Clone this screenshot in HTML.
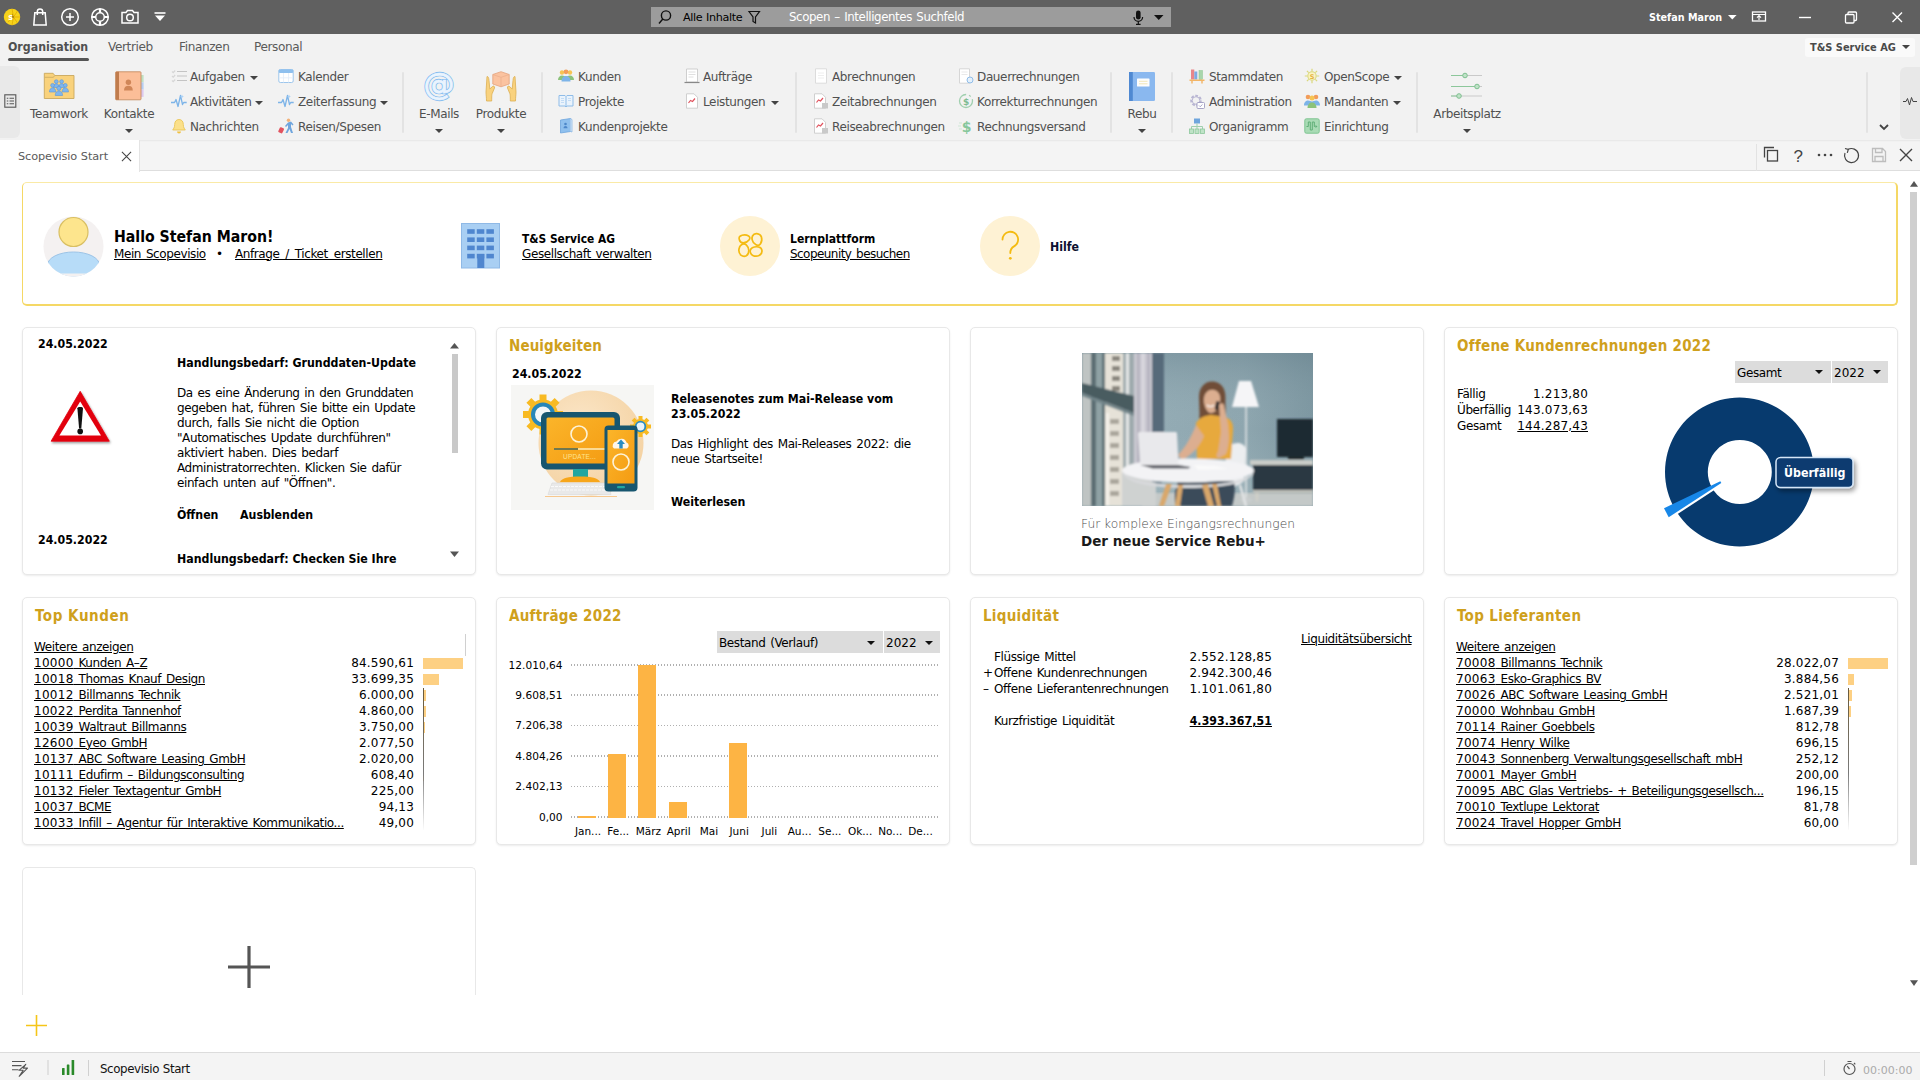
<!DOCTYPE html>
<html lang="de"><head><meta charset="utf-8"><title>Scopevisio Start</title>
<style>
*{box-sizing:border-box;margin:0;padding:0}
html,body{width:1920px;height:1080px;overflow:hidden;background:#fff}
body{position:relative;font-family:"DejaVu Sans","Liberation Sans",sans-serif;font-size:12px;letter-spacing:-.4px;word-spacing:1.400px;color:#000;line-height:15px}
.a{position:absolute;white-space:nowrap}
.b{font-family:"DejaVu Sans Condensed","Liberation Sans",sans-serif;font-weight:bold;font-size:12.25px;letter-spacing:0;word-spacing:0}
.n{letter-spacing:.2px;word-spacing:0}
.u{text-decoration:underline;text-decoration-thickness:1.350px;text-underline-offset:1.300px}
svg{position:absolute;overflow:visible}
#top{left:0;top:0;width:1920px;height:34px;background:#606060}
#menu{left:0;top:34px;width:1920px;height:106px;background:#f2f2f2}
#tabs{left:0;top:140px;width:1920px;height:31px;background:#f4f4f4;border-bottom:1px solid #dedede;box-shadow:inset 0 2px 2px -1px rgba(0,0,0,.06)}
#status{left:0;top:1052px;width:1920px;height:28px;background:#f4f4f4;border-top:1px solid #dcdcdc}
.rt{color:#505050;font-size:12px;letter-spacing:-.36px;word-spacing:0}
.sep{position:absolute;top:72px;width:2px;height:61px;background:#e3e3e3;border-radius:1px}
.card{position:absolute;width:454px;height:248px;background:#fff;border:1px solid #e8e8e8;border-radius:5px;box-shadow:0 1px 2px rgba(0,0,0,.08)}
.ttl{font-family:"DejaVu Sans Condensed","Liberation Sans",sans-serif;font-weight:bold;font-size:15px;letter-spacing:.27px;word-spacing:0;color:#cfa01c}
.r{text-align:right}
.dd{position:absolute;background:#dcdcdc;height:22px}
.tri{position:absolute;width:0;height:0;border-left:4px solid transparent;border-right:4px solid transparent;border-top:4.500px solid #444}
</style></head><body>
<!-- ===== TOP BAR ===== -->
<div id="top" class="a"></div>
<svg style="left:0;top:0" width="200" height="34" viewBox="0 0 200 34" fill="none" stroke="#fff" stroke-width="1.5">
 <circle cx="12" cy="17" r="8.200" fill="#f7d21a" stroke="none"/>
 <g stroke="#e0a800" stroke-width=".7"><path d="M13.500 17L12 8.800M13.500 17L17.500 11M13.500 17L20.200 17M13.500 17L17.500 23M13.500 17L12 25.200M13.500 17L8 22"/></g>
 <path d="M13.500 17l-1.300-3.500 0 7z" fill="#5a4a10" stroke="none"/>
 <text x="8.300" y="19.800" font-family="DejaVu Sans,sans-serif" font-weight="bold" font-size="8" fill="#fff" stroke="none">s</text>
 <path d="M34.800 12.700h10.400l1 12.300h-12.400z M37.300 15v-3.400a2.700 2.700 0 0 1 5.400 0v3.400"/>
 <circle cx="70" cy="17" r="8.3"/><path d="M70 13v8M66 17h8"/>
 <circle cx="100" cy="17" r="8.3"/><circle cx="100" cy="17" r="4.3"/><path d="M100 8.7v4M100 21.3v4M91.7 17h4M104.3 17h4" stroke-width="2.2"/>
 <path d="M122 12.5h4l1.5-2h5l1.5 2h4v10.5h-16z"/><circle cx="130" cy="17.5" r="3.3"/>
 <path d="M154.5 13h11" stroke-width="1.6"/><path d="M155 15.5h10l-5 5.5z" fill="#fff" stroke="none"/>
</svg>
<div class="a" style="left:651px;top:7px;width:520px;height:20px;background:#9c9c9c"></div>
<svg style="left:655px;top:7px" width="520" height="21" viewBox="0 0 520 21" fill="none" stroke="#111" stroke-width="1.4">
 <circle cx="11" cy="8.5" r="4.6"/><path d="M7.8 12L4 16.5"/>
 <path d="M94 4.5h10.5l-4 5.5v6l-2.5-1.5v-4.5z" stroke-width="1.2"/>
 <rect x="481" y="3.5" width="4.6" height="9" rx="2.3" fill="#111" stroke="none"/><path d="M479 10a4.3 4.3 0 0 0 8.6 0M483.3 14.5v2.5M481 17.3h4.6" stroke-width="1.2"/>
 <path d="M499 8h9.5l-4.75 5z" fill="#111" stroke="none"/>
</svg>
<div class="a" style="left:683px;top:10px;color:#000;font-size:11.200px;letter-spacing:-.35px;word-spacing:.5px">Alle Inhalte</div>
<div class="a" style="left:789px;top:10px;color:#fff;font-size:11.800px;letter-spacing:-.4px;word-spacing:1px">Scopen – Intelligentes Suchfeld</div>
<div class="a b" style="left:1649px;top:9.500px;color:#fff;font-size:10.700px">Stefan Maron</div>
<svg style="left:1720px;top:0" width="200" height="34" viewBox="0 0 200 34" fill="none" stroke="#fff" stroke-width="1.3">
 <path d="M8 15h8.6l-4.3 4.6z" fill="#fff" stroke="none"/>
 <rect x="32.5" y="12" width="13" height="9"/><path d="M32.5 14.5h13M39 20v-4M37 17.6l2-2 2 2" stroke-width="1.1"/>
 <path d="M79 17.5h12" stroke-width="1.4"/>
 <rect x="125.5" y="14.5" width="8.5" height="8.5" rx="1"/><path d="M128 14.5v-1.5a1 1 0 0 1 1-1h6.5a1 1 0 0 1 1 1v6.5a1 1 0 0 1-1 1h-1.500"/>
 <path d="M172.500 12.500l9.500 9.500M182 12.500l-9.500 9.500" stroke-width="1.4"/>
</svg>
<!-- ===== MENU + RIBBON ===== -->
<div id="menu" class="a"></div>
<div class="a b" style="left:8px;top:38.500px;font-size:12.250px;color:#505050;line-height:17px">Organisation</div>
<div class="a" style="left:8px;top:58px;width:81px;height:3px;background:#555;border-radius:1.5px"></div>
<div class="a" style="left:108px;top:38.500px;font-size:12.100px;color:#5a5a5a;line-height:17px">Vertrieb</div>
<div class="a" style="left:179px;top:38.500px;font-size:12.100px;color:#5a5a5a;line-height:17px">Finanzen</div>
<div class="a" style="left:254px;top:38.500px;font-size:12.100px;color:#5a5a5a;line-height:17px">Personal</div>
<div class="a" style="left:1805px;top:38px;width:110px;height:19px;background:#fafafa;border-radius:3px"></div>
<div class="a b" style="left:1810px;top:40px;color:#4a4a4a;font-size:10.950px">T&amp;S Service AG</div>
<div class="tri" style="left:1902px;top:45px"></div>
<div class="a" style="left:0;top:66px;width:20px;height:72px;background:#e9e9e9;border-radius:0 6px 6px 0"></div>
<svg style="left:4px;top:94px" width="13" height="14" viewBox="0 0 13 14" fill="none" stroke="#555" stroke-width="1.1"><rect x=".8" y=".8" width="11" height="12.400"/><path d="M2.800 4.300h1.500M5.500 4.300h4.500M2.800 7h1.500M5.500 7h4.500M2.800 9.700h1.500M5.500 9.700h4.500"/></svg>
<div class="a" style="left:1900px;top:67px;width:20px;height:72px;background:#e8e8e8;border-radius:6px 0 0 6px"></div>
<svg style="left:1903px;top:96px" width="14" height="10" viewBox="0 0 14 10" fill="none" stroke="#444" stroke-width="1"><path d="M0 5.500h3l1.500-3 2 6.500 2-7.500 1.500 4h4"/></svg>
<svg style="left:1879px;top:124px" width="10" height="7" viewBox="0 0 10 7" fill="none" stroke="#444" stroke-width="1.800"><path d="M1 1l4 4 4-4"/></svg>
<svg style="left:171px;top:68px" width="16" height="16" viewBox="0 0 16 16"><g stroke="#c4c4c4" stroke-width="1.2" fill="none"><path d="M6 3.500h10M6 8h10M6 12.500h10"/><path d="M1 3.500l1.200 1.200 2-2.200M1 8l1.200 1.200 2-2.200M1 12.500l1.200 1.200 2-2.200" stroke="#d6d6d6"/></g></svg>
<div class="a rt" style="left:190px;top:69.5px">Aufgaben</div>
<div class="tri" style="left:250px;top:75.5px"></div>
<svg style="left:171px;top:93px" width="16" height="16" viewBox="0 0 16 16"><g fill="none" stroke="#7db4e8" stroke-width="1.300" stroke-linejoin="round"><path d="M0 9.500h3.500l1.500-3 2 7 2.500-11 2 9 1.200-2h3"/></g><path d="M11 1.500l.6 1.400 1.400.6-1.400.6-.6 1.400-.6-1.400-1.400-.6 1.400-.6z" fill="#a9d0f5"/></svg>
<div class="a rt" style="left:190px;top:94.5px">Aktivitäten</div>
<div class="tri" style="left:255px;top:100.5px"></div>
<svg style="left:171px;top:118px" width="16" height="16" viewBox="0 0 16 16"><path d="M8 1.500c-3 0-4.300 2.300-4.300 5 0 3-1.400 4.600-2 5.500h12.600c-.6-.9-2-2.500-2-5.500 0-2.700-1.300-5-4.300-5z" fill="#fbe08a" stroke="#e9c24d" stroke-width=".8"/><path d="M6 13.500a2 2 0 0 0 4 0" fill="#f0c040"/></svg>
<div class="a rt" style="left:190px;top:119.5px">Nachrichten</div>
<svg style="left:278px;top:68px" width="16" height="16" viewBox="0 0 16 16"><rect x=".8" y="1.500" width="14.400" height="13" rx="1.500" fill="#fff" stroke="#9dc6ec" stroke-width="1"/><rect x=".8" y="1.500" width="14.400" height="3.500" rx="1" fill="#8fc0ee"/><path d="M5.500 5v9.500M10.500 5v9.500M1 9.800h14" stroke="#e3eef9" stroke-width=".8"/></svg>
<div class="a rt" style="left:298px;top:69.5px">Kalender</div>
<svg style="left:278px;top:93px" width="16" height="16" viewBox="0 0 16 16"><g fill="none" stroke="#7db4e8" stroke-width="1.300" stroke-linejoin="round"><path d="M0 9.500h3.500l1.500-3 2 7 2.500-11 2 9 1.200-2h3"/></g><path d="M11 1.500l.6 1.400 1.400.6-1.400.6-.6 1.400-.6-1.400-1.400-.6 1.400-.6z" fill="#a9d0f5"/></svg>
<div class="a rt" style="left:298px;top:94.5px">Zeiterfassung</div>
<div class="tri" style="left:380px;top:100.5px"></div>
<svg style="left:278px;top:118px" width="16" height="16" viewBox="0 0 16 16"><circle cx="10.500" cy="2.300" r="1.700" fill="#f2b27a"/><path d="M10 4.500l-3 3.500 1 1 2-2v3l-2.500 5h2l2-4 1.500 4h2l-2-6v-3l1.500 1.500 1-1-2.500-3z" fill="#6fa5dd"/><rect x="1" y="9.500" width="4.500" height="5.500" rx="1" transform="rotate(25 3 12)" fill="#e2535f"/></svg>
<div class="a rt" style="left:298px;top:119.5px">Reisen/Spesen</div>
<svg style="left:558px;top:68px" width="16" height="16" viewBox="0 0 16 16"><circle cx="4" cy="4.500" r="2.200" fill="#f6c453"/><circle cx="12" cy="4.500" r="2.200" fill="#f6c453"/><circle cx="8" cy="3.800" r="2.400" fill="#f29c5a"/><path d="M0 12c0-3 2-4.500 4-4.500s2.500 1 4 1 2-1 4-1 4 1.500 4 4.500z" fill="#8cc27a"/><path d="M3.500 13.500c0-3.500 2-5.500 4.500-5.500s4.500 2 4.500 5.500z" fill="#7db4e8"/></svg>
<div class="a rt" style="left:578px;top:69.5px">Kunden</div>
<svg style="left:558px;top:93px" width="16" height="16" viewBox="0 0 16 16"><path d="M1 2.500h6l1 1 1-1h6v10.500h-6l-1 1-1-1h-6z" fill="#eaf3fc" stroke="#8fbce8" stroke-width="1"/><path d="M8 3.500v10" stroke="#8fbce8"/><path d="M3 5.500h3M3 7.500h3M3 9.500h3M10 5.500h3M10 7.500h3" stroke="#b9d6f2" stroke-width=".8"/></svg>
<div class="a rt" style="left:578px;top:94.5px">Projekte</div>
<svg style="left:558px;top:118px" width="16" height="16" viewBox="0 0 16 16"><path d="M2.500 2l10-1.500v13l-10 1.500z" fill="#8fc0ee" stroke="#6da5dd" stroke-width=".8"/><path d="M12.500 .5l1.500 1v12.500l-1.500-.5" fill="#dbeaf8" stroke="#6da5dd" stroke-width=".6"/><circle cx="7.500" cy="6" r="1.300" fill="#4d87c9"/><path d="M5.500 10.300c0-1.600 1-2.300 2-2.300s2 .7 2 2.300z" fill="#4d87c9"/></svg>
<div class="a rt" style="left:578px;top:119.5px">Kundenprojekte</div>
<svg style="left:684px;top:68px" width="16" height="16" viewBox="0 0 16 16"><path d="M2.500 1h11v13h-11z" fill="#fff" stroke="#cfcfcf" stroke-width="1"/><path d="M4.500 4h7M4.500 6.500h7M4.500 9h5" stroke="#ddd" stroke-width=".9"/><path d="M.5 14.500h15" stroke="#888" stroke-width="1.200"/></svg>
<div class="a rt" style="left:703px;top:69.5px">Aufträge</div>
<svg style="left:684px;top:93px" width="16" height="16" viewBox="0 0 16 16"><path d="M2.500 .8h7.500l3.500 3.500v10.900h-11z" fill="#fff" stroke="#cfcfcf" stroke-width="1"/><path d="M4.500 10l2-2.500 2 1 2.500-3" fill="none" stroke="#e0525e" stroke-width="1.200"/></svg>
<div class="a rt" style="left:703px;top:94.5px">Leistungen</div>
<div class="tri" style="left:771px;top:100.5px"></div>
<svg style="left:813px;top:68px" width="16" height="16" viewBox="0 0 16 16"><path d="M2.500 .8h11v14.400h-11z" fill="#fff" stroke="#dcdcdc" stroke-width="1"/><path d="M5 5h6M5 7.500h6M5 10h6" stroke="#ececec" stroke-width=".9"/></svg>
<div class="a rt" style="left:832px;top:69.5px">Abrechnungen</div>
<svg style="left:813px;top:93px" width="16" height="16" viewBox="0 0 16 16"><path d="M1.500 .8h7.500l3.500 3.500v10.900h-11z" fill="#fff" stroke="#cfcfcf" stroke-width="1"/><path d="M3.500 9.500l2-2.500 2 1 2.500-3" fill="none" stroke="#e0525e" stroke-width="1.200"/><rect x="9" y="10" width="6" height="5.500" fill="#c9c9c9"/></svg>
<div class="a rt" style="left:832px;top:94.5px">Zeitabrechnungen</div>
<svg style="left:813px;top:118px" width="16" height="16" viewBox="0 0 16 16"><path d="M1.500 .8h7.500l3.500 3.500v10.900h-11z" fill="#fff" stroke="#cfcfcf" stroke-width="1"/><path d="M3.500 9.500l2-2.500 2 1 2.500-3" fill="none" stroke="#e0525e" stroke-width="1.200"/><rect x="9" y="10" width="6" height="5.500" fill="#c9c9c9"/></svg>
<div class="a rt" style="left:832px;top:119.5px">Reiseabrechnungen</div>
<svg style="left:958px;top:68px" width="16" height="16" viewBox="0 0 16 16"><path d="M1.500 .8h10v14.400h-10z" fill="#fff" stroke="#d6d6d6" stroke-width="1"/><path d="M3.500 4h6M3.500 6.500h6" stroke="#e6e6e6" stroke-width=".9"/><circle cx="12" cy="12" r="3" fill="#e4f0fb" stroke="#8fbce8" stroke-width="1"/></svg>
<div class="a rt" style="left:977px;top:69.5px">Dauerrechnungen</div>
<svg style="left:958px;top:93px" width="16" height="16" viewBox="0 0 16 16"><circle cx="8" cy="8" r="6.500" fill="none" stroke="#9fcfae" stroke-width="1.300" stroke-dasharray="30 3 2 3 2 3"/><text x="8" y="11.500" font-size="9" font-family="DejaVu Sans" text-anchor="middle" fill="#7dbb91" font-weight="bold">$</text></svg>
<div class="a rt" style="left:977px;top:94.5px">Korrekturrechnungen</div>
<svg style="left:958px;top:118px" width="16" height="16" viewBox="0 0 16 16"><text x="8.500" y="13.500" font-size="14" font-family="DejaVu Sans" text-anchor="middle" fill="#86c79b" font-weight="bold">$</text><path d="M1 5h3M0 8h3M1 11h3" stroke="#cfe7d6" stroke-width="1"/></svg>
<div class="a rt" style="left:977px;top:119.5px">Rechnungsversand</div>
<svg style="left:1189px;top:68px" width="16" height="16" viewBox="0 0 16 16"><rect x="2" y="1.500" width="3.300" height="10" fill="#e8868a"/><rect x="5.300" y="3.500" width="3" height="8" fill="#7fa9e2"/><rect x="10" y="2.500" width="3.500" height="9" fill="#a9d6ab" stroke="#8cc590" stroke-width=".5"/><path d="M.5 11.500h15v1.600h-1.800v2.400h-1.400v-2.400h-8.600v2.400h-1.400v-2.400h-1.800z" fill="#f3b566"/></svg>
<div class="a rt" style="left:1209px;top:69.5px">Stammdaten</div>
<svg style="left:1189px;top:93px" width="16" height="16" viewBox="0 0 16 16"><circle cx="7" cy="7.500" r="4.500" fill="none" stroke="#b9b6d3" stroke-width="2.600" stroke-dasharray="2.500 1.500"/><circle cx="7" cy="7.500" r="3.800" fill="#f2f2f2" stroke="#b9b6d3" stroke-width="1"/><rect x="8" y="9.500" width="7.500" height="6" rx="1" fill="#fff" stroke="#9d9abf" stroke-width=".9"/><path d="M10 12.500l1.200 1.200 2.300-2.300" fill="none" stroke="#9d9abf" stroke-width=".9"/></svg>
<div class="a rt" style="left:1209px;top:94.5px">Administration</div>
<svg style="left:1189px;top:118px" width="16" height="16" viewBox="0 0 16 16"><rect x="5" y=".5" width="6" height="5" fill="#6fa5dd"/><path d="M8 5.500v3M2.500 11v-2.500h11v2.500M8 8.500v2.500" fill="none" stroke="#9fcfae" stroke-width="1"/><rect x=".5" y="11" width="4" height="4.500" fill="#bfe3c7" stroke="#8cc79b" stroke-width=".8"/><rect x="6" y="11" width="4" height="4.500" fill="#bfe3c7" stroke="#8cc79b" stroke-width=".8"/><rect x="11.500" y="11" width="4" height="4.500" fill="#bfe3c7" stroke="#8cc79b" stroke-width=".8"/></svg>
<div class="a rt" style="left:1209px;top:119.5px">Organigramm</div>
<svg style="left:1304px;top:68px" width="16" height="16" viewBox="0 0 16 16"><circle cx="8" cy="8" r="4.200" fill="#fbf3c4" stroke="#d9d77a" stroke-width="1.100"/><path d="M8 .8v2.500M8 12.700v2.500M.8 8h2.500M12.700 8h2.500M2.900 2.900l1.800 1.800M11.300 11.300l1.800 1.800M13.100 2.900l-1.800 1.800M4.700 11.300l-1.800 1.800" stroke="#d9d77a" stroke-width="1.200"/><text x="8" y="10.500" font-size="6.500" font-family="DejaVu Sans" text-anchor="middle" fill="#e3b341" font-weight="bold">S</text></svg>
<div class="a rt" style="left:1324px;top:69.5px">OpenScope</div>
<div class="tri" style="left:1394px;top:75.5px"></div>
<svg style="left:1304px;top:93px" width="16" height="16" viewBox="0 0 16 16"><circle cx="4" cy="4" r="2.300" fill="#f29c5a"/><circle cx="12" cy="4" r="2.300" fill="#f29c5a"/><circle cx="8" cy="5" r="2.500" fill="#f6c453"/><path d="M0 12.500c0-3.500 2-5 4-5s2.500 1 4 1 2-1 4-1 4 1.500 4 5z" fill="#7db4e8"/><path d="M3.500 15c0-3.500 2-5.500 4.500-5.500s4.500 2 4.500 5.500z" fill="#8cc27a"/></svg>
<div class="a rt" style="left:1324px;top:94.5px">Mandanten</div>
<div class="tri" style="left:1393px;top:100.5px"></div>
<svg style="left:1304px;top:118px" width="16" height="16" viewBox="0 0 16 16"><rect x=".8" y=".8" width="14.400" height="14.400" rx="1.500" fill="#a9dbb5" stroke="#7fc592" stroke-width="1"/><path d="M2.500 8.500h1.800v-4.500h2v8h2v-8h2v4.500h1" fill="none" stroke="#5fae77" stroke-width="1"/><path d="M11.500 7l2 1.500-2 1.500z" fill="#5fae77"/></svg>
<div class="a rt" style="left:1324px;top:119.5px">Einrichtung</div>
<div class="sep" style="left:402px"></div>
<div class="sep" style="left:541px"></div>
<div class="sep" style="left:795px"></div>
<div class="sep" style="left:1110px"></div>
<div class="sep" style="left:1171px"></div>
<div class="sep" style="left:1416px"></div>
<div class="sep" style="left:1866px"></div>
<div class="a rt" style="left:-1px;width:120px;text-align:center;top:106.500px">Teamwork</div>
<div class="a rt" style="left:69px;width:120px;text-align:center;top:106.500px">Kontakte</div>
<div class="tri" style="left:125px;top:129px"></div>
<div class="a rt" style="left:379px;width:120px;text-align:center;top:106.500px">E-Mails</div>
<div class="tri" style="left:435px;top:129px"></div>
<div class="a rt" style="left:441px;width:120px;text-align:center;top:106.500px">Produkte</div>
<div class="tri" style="left:497px;top:129px"></div>
<div class="a rt" style="left:1082px;width:120px;text-align:center;top:106.500px">Rebu</div>
<div class="tri" style="left:1138px;top:129px"></div>
<div class="a rt" style="left:1407px;width:120px;text-align:center;top:106.500px">Arbeitsplatz</div>
<div class="tri" style="left:1463px;top:129px"></div>
<svg style="left:0;top:0" width="160" height="110" viewBox="0 0 160 110"><path d="M44.300 73.300h8.800l1.700 2.200h19.200v23h-29.700z" fill="#f9d27c" stroke="#c9a85e" stroke-width=".9" stroke-linejoin="round"/><path d="M44.800 77.300h8.600l1.200-1.700" fill="none" stroke="#c9a85e" stroke-width=".8"/><g fill="#7fb6ee" stroke="#5b97d8" stroke-width=".6"><circle cx="56.300" cy="81.600" r="1.900"/><circle cx="61.600" cy="81.600" r="1.900"/><path d="M53.300 87.500c0-2.400 1.300-3.700 3-3.700s3 1.300 3 3.700zM58.600 87.500c0-2.400 1.300-3.700 3-3.700s3 1.300 3 3.700z"/><circle cx="52.600" cy="85.300" r="1.900"/><circle cx="65.300" cy="85.300" r="1.900"/><path d="M49.400 92c0-2.600 1.400-4.200 3.200-4.200s3.200 1.600 3.200 4.200zM62.100 92c0-2.600 1.400-4.200 3.200-4.200s3.200 1.600 3.200 4.200z"/><circle cx="58.900" cy="88.300" r="2.100"/><path d="M55.200 95.500c0-2.900 1.600-4.600 3.700-4.600s3.700 1.700 3.700 4.600z"/></g>
<rect x="141" y="75" width="2.600" height="7.300" fill="#bfe0c2"/><rect x="141" y="82.300" width="2.600" height="7.300" fill="#b5cdf2"/><rect x="141" y="89.600" width="2.600" height="7.300" fill="#dcc9ee"/>
<rect x="115.700" y="71.800" width="25.300" height="28" rx=".8" fill="#fbbe98" stroke="#c68d63" stroke-width=".9"/><rect x="115.700" y="71.800" width="3.300" height="28" fill="#c07c4d"/><circle cx="128.400" cy="82.300" r="2.700" fill="#d08658"/><path d="M124 90.500c0-3.300 1.900-4.700 4.400-4.700s4.400 1.400 4.400 4.700z" fill="#d08658"/></svg>
<svg style="left:422px;top:70px" width="34" height="34" viewBox="0 0 34 34" fill="none" stroke="#7db8ee"><text x="17" y="24.500" font-size="31" font-family="DejaVu Sans" text-anchor="middle" fill="#86bdf0" stroke="#86bdf0" stroke-width="2.400" letter-spacing="0">@</text><text x="17" y="24.500" font-size="31" font-family="DejaVu Sans" text-anchor="middle" fill="#eaf4fe" stroke="#eaf4fe" stroke-width=".7" letter-spacing="0">@</text></svg>
<svg style="left:484px;top:70px" width="34" height="34" viewBox="0 0 34 34"><path d="M8.800 4.500l8.200-2.800 8.200 2.800v9.500l-8.200 2.800-8.200-2.800z" fill="#fbc3a0" stroke="#e5a27c" stroke-width=".8" stroke-linejoin="round"/><path d="M8.800 4.500l8.200 2.800 8.200-2.800M17 7.300v9.500" fill="none" stroke="#e9ae8b" stroke-width=".7"/><path d="M3 6.500c1.300 0 1.700 1 2 4l.8 8.500 2.700-2.500c1-1 2.500 0 2 1.500l-2.300 5.500c-.5 1.500-.5 3-.5 7.500h-5.200c0-4-.5-6-.5-9z" fill="#f9d27e" stroke="#dcae52" stroke-width=".8"/><path d="M31 6.500c-1.300 0-1.700 1-2 4l-.8 8.500-2.700-2.500c-1-1-2.500 0-2 1.500l2.300 5.500c.5 1.500.5 3 .5 7.500h5.200c0-4 .5-6 .5-9z" fill="#f9d27e" stroke="#dcae52" stroke-width=".8"/></svg>
<svg style="left:1128px;top:71px" width="28" height="31" viewBox="0 0 28 31"><rect x="1" y="1" width="26" height="29" rx="1.200" fill="#8ab8ef"/><rect x="1" y="1" width="3.800" height="29" fill="#4f89d2"/><rect x="9" y="7.500" width="12.500" height="8" rx=".6" fill="#fdfdfd"/><path d="M11 10.300h8.500M11 12.800h8.500" stroke="#efe3b0" stroke-width=".9"/></svg>
<svg style="left:1450px;top:72px" width="34" height="28" viewBox="0 0 34 28" fill="none"><path d="M1 3.500h31M1 14.500h31M1 24h31" stroke="#c9c9c9" stroke-width="1.200"/><path d="M1 3.500h14M1 14.500h26M1 24h8" stroke="#8cc79b" stroke-width="1.200"/><circle cx="15" cy="3.500" r="2.300" fill="#bfe3c7" stroke="#7fbf90" stroke-width="1"/><circle cx="27" cy="14.500" r="2.300" fill="#bfe3c7" stroke="#7fbf90" stroke-width="1"/><circle cx="9" cy="24" r="2.300" fill="#bfe3c7" stroke="#7fbf90" stroke-width="1"/></svg>
<div id="tabs" class="a"></div>
<div class="a" style="left:0;top:140px;width:139.500px;height:32px;background:#fff;border-right:1px solid #e4e4e4"></div>
<div class="a" style="left:18px;top:149px;color:#5a5a5a;font-size:11.300px;letter-spacing:-.1px;word-spacing:.2px">Scopevisio Start</div>
<svg style="left:120.500px;top:150.500px" width="11" height="11" viewBox="0 0 12 12" stroke="#444" stroke-width="1.150"><path d="M1 1l10 10M11 1l-10 10"/></svg>
<div class="a" style="left:1756px;top:144px;width:1px;height:27px;background:#e2e2e2"></div>
<svg style="left:1760px;top:144px" width="160" height="24" viewBox="0 0 160 24" fill="none" stroke="#444" stroke-width="1.300">
<rect x="7.500" y="6.500" width="10" height="10.500"/><path d="M4.500 13.500v-10h9.500"/>
<text x="38" y="17.500" font-size="17" font-family="Liberation Sans" text-anchor="middle" fill="#444" stroke="none">?</text>
<circle cx="59" cy="11" r="1.300" fill="#444" stroke="none"/><circle cx="65" cy="11" r="1.300" fill="#444" stroke="none"/><circle cx="71" cy="11" r="1.300" fill="#444" stroke="none"/>
<path d="M88 5.500a7 7 0 1 1-3 3.500M85 4.500l3.300 1-1 3.300" stroke-width="1.200"/>
<g stroke="#bdbdbd"><path d="M112.500 4.500h10l3 3v10h-13zM115.500 4.500v4h6.500v-4M115 17.500v-5h8v5"/></g>
<path d="M140 5l12 12M152 5l-12 12" stroke-width="1.400"/></svg>
<div id="status" class="a"></div>
<svg style="left:0;top:1052px" width="100" height="28" viewBox="0 0 100 28" fill="none" stroke="#555" stroke-width="1.100"><path d="M12 9.500h13M12 13.600h9.500M12 17.700h6.500"/><path d="M25.800 12.300l-6.800 6h4.200l-4 6 8.300-8.200h-4.300z" fill="#f4f4f4" stroke-linejoin="round"/><path d="M48 8v15" stroke="#d2d2d2"/></svg>
<div class="a" style="left:88px;top:1060px;width:1px;height:16px;background:#d0d0d0"></div>
<svg style="left:61px;top:1060px" width="14" height="15" viewBox="0 0 14 15"><rect x="1" y="8" width="2.600" height="7" rx=".6" fill="#2a8a2a"/><rect x="5.800" y="4.500" width="2.600" height="10.500" rx=".6" fill="#2a8a2a"/><rect x="10.600" y="0" width="2.600" height="15" rx=".6" fill="#2a8a2a"/></svg>
<div class="a" style="left:100px;top:1062px;color:#111;word-spacing:.4px;font-size:11.850px">Scopevisio Start</div>
<div class="a" style="left:1824px;top:1060px;width:1px;height:16px;background:#d0d0d0"></div>
<svg style="left:1842px;top:1059px" width="16" height="18" viewBox="0 0 16 18" fill="none" stroke="#555" stroke-width="1.200"><circle cx="7.500" cy="10" r="5.500"/><path d="M7.500 10l-2.300-2.800M5.500 2.500h4M12 4l1.300 1.300"/></svg>
<div class="a" style="left:1863px;top:1062.500px;color:#aaa;font-size:11px;letter-spacing:0">00:00:00</div>
<div class="a" style="left:1910px;top:192px;width:7px;height:673px;background:#cfcfcf"></div>
<svg style="left:1909.500px;top:181px" width="8" height="6" viewBox="0 0 8 6"><path d="M0 5.800h8l-4-5.800z" fill="#555"/></svg>
<svg style="left:1909.500px;top:979.500px" width="8" height="6" viewBox="0 0 8 6"><path d="M0 .2h8l-4 5.800z" fill="#555"/></svg>
<div class="a" style="left:22px;top:182px;width:1876px;height:124px;border:1px solid #f5d865;border-top-color:#faeaa6;border-right-width:2px;border-bottom-width:2px;border-radius:5px;background:#fff"></div>
<svg style="left:43px;top:216px" width="61" height="61" viewBox="0 0 61 61"><defs><clipPath id="av"><circle cx="30.500" cy="30.500" r="30"/></clipPath></defs><circle cx="30.500" cy="30.500" r="30" fill="#f4f1f1"/><g clip-path="url(#av)"><ellipse cx="30.500" cy="49" rx="26" ry="13" fill="#b7dcf8" stroke="#9cc3e6" stroke-width="1"/><rect x="0" y="57.500" width="61" height="5" fill="#f4f1f1"/></g><circle cx="30.500" cy="16" r="14.500" fill="#fde58d" stroke="#d9bf62" stroke-width="1.200"/></svg>
<div class="a b" style="left:114px;top:227px;font-size:15.700px;line-height:20px">Hallo Stefan Maron!</div>
<div class="a u" style="left:114px;top:246.500px">Mein Scopevisio</div>
<div class="a" style="left:216px;top:246.500px">•</div>
<div class="a u" style="left:235px;top:246.500px;word-spacing:2.400px">Anfrage / Ticket erstellen</div>
<svg style="left:461px;top:223px" width="40" height="46" viewBox="0 0 40 46"><rect x=".5" y=".5" width="38" height="44.500" fill="#a9cff3" stroke="#8fb9e6" stroke-width="1"/><rect x="6.2" y="6.2" width="7.500" height="4.600" fill="#4f86cf"/><rect x="15.8" y="6.2" width="7.500" height="4.600" fill="#4f86cf"/><rect x="25.4" y="6.2" width="7.500" height="4.600" fill="#4f86cf"/><rect x="6.2" y="14.399999999999999" width="7.500" height="4.600" fill="#4f86cf"/><rect x="15.8" y="14.399999999999999" width="7.500" height="4.600" fill="#4f86cf"/><rect x="25.4" y="14.399999999999999" width="7.500" height="4.600" fill="#4f86cf"/><rect x="6.2" y="22.599999999999998" width="7.500" height="4.600" fill="#4f86cf"/><rect x="15.8" y="22.599999999999998" width="7.500" height="4.600" fill="#4f86cf"/><rect x="25.4" y="22.599999999999998" width="7.500" height="4.600" fill="#4f86cf"/><rect x="6.2" y="30.799999999999997" width="7.500" height="4.600" fill="#4f86cf"/><rect x="15.8" y="30.799999999999997" width="7.500" height="4.600" fill="#4f86cf"/><rect x="25.4" y="30.799999999999997" width="7.500" height="4.600" fill="#4f86cf"/><rect x="16.300" y="31" width="7" height="14" fill="#4f86cf"/></svg>
<div class="a b" style="left:522px;top:232px;font-size:11.850px">T&amp;S Service AG</div>
<div class="a u" style="left:522px;top:246.500px">Gesellschaft verwalten</div>
<svg style="left:720px;top:216px" width="60" height="60" viewBox="0 0 60 60"><circle cx="30" cy="30" r="30" fill="#fef2d4"/><g fill="none" stroke="#f4bb12" stroke-width="1.700" stroke-linejoin="round"><path d="M19.300 23.500c-.8-2 .5-3.800 2.500-4.200 2.300-.6 5-.4 6.800.6 1.400.8 1.600 2.600.6 3.800-1.200 1.600-3 2.800-5 3-2.400.4-4.400-1-4.900-3.200z"/><path d="M32.500 20c.8-1.600 2.600-2.600 4.400-2.400 2 .2 3.800 1.400 4.500 3.300.7 2.200.4 4.800-.9 6.800-1 1.500-3 1.900-4.500 1-1.900-1-3.400-2.800-3.800-4.900-.3-1.300-.3-2.600.3-3.800z"/><path d="M19 33c.3-1.800 1.200-3.500 2.700-4.500 1.500-1 3.600-.7 4.800.6 1.500 1.500 2.400 3.600 2.300 5.700 0 2-.8 4-2.500 5-1.700.9-3.900.5-5.400-.7-1.700-1.500-2.300-3.900-1.900-6.100z"/><path d="M30.500 36.800c-.7-1.800.1-4 1.800-5 1.900-1 4.200-1.300 6.300-.8 1.800.4 3.300 1.900 3.400 3.800.1 2-1.100 3.900-2.900 4.700-2 .9-4.400.8-6.300-.1-1-.5-1.900-1.400-2.300-2.600z"/></g></svg>
<div class="a b" style="left:790px;top:232px;font-size:12.050px">Lernplattform</div>
<div class="a u" style="left:790px;top:246.500px;letter-spacing:-.55px">Scopeunity besuchen</div>
<svg style="left:980px;top:216px" width="60" height="60" viewBox="0 0 60 60"><circle cx="30" cy="30" r="30" fill="#fef2d4"/><path d="M22.500 23.500a7.800 7.800 0 1 1 11.500 6.900c-2.600 1.500-3.700 3.100-3.700 6.600" fill="none" stroke="#f4bb12" stroke-width="1.800" stroke-linecap="round"/><circle cx="30.300" cy="42.300" r="1.400" fill="#f4bb12"/></svg>
<div class="a b" style="left:1050px;top:240px;color:#0c1030">Hilfe</div>
<div class="card" style="left:22px;top:327px;"></div>
<div class="card" style="left:496px;top:327px;"></div>
<div class="card" style="left:970px;top:327px;"></div>
<div class="card" style="left:1444px;top:327px;"></div>
<div class="card" style="left:22px;top:597px;"></div>
<div class="card" style="left:496px;top:597px;"></div>
<div class="card" style="left:970px;top:597px;"></div>
<div class="card" style="left:1444px;top:597px;"></div>
<div class="card" style="left:22px;top:867px;height:140px;border-bottom:none;border-radius:5px 5px 0 0;box-shadow:none;"></div>
<div class="a b" style="left:38px;top:336.500px">24.05.2022</div>
<svg style="left:0;top:0" width="120" height="450" viewBox="0 0 120 450"><defs><filter id="ds" x="-10%" y="-10%" width="125%" height="125%"><feDropShadow dx="1" dy="1.500" stdDeviation="1.100" flood-opacity=".4"/></filter></defs><path d="M80.200 391.300L109.300 441.200H51.100z" fill="#e2000f" stroke="#e2000f" stroke-width=".8" stroke-linejoin="round" filter="url(#ds)"/><path d="M80.200 401.600L101 435.600H59.400z" fill="#fff"/><path d="M77.400 408.200c0-1.500 5.600-1.500 5.600 0l-1.700 20.300h-2.200z" fill="#111"/><circle cx="80.200" cy="431.400" r="2.800" fill="#111"/></svg>
<div class="a b" style="left:177px;top:355.500px">Handlungsbedarf: Grunddaten-Update</div>
<div class="a" style="left:177px;top:385.500px;white-space:normal;width:260px">Da es eine Änderung in den Grunddaten<br>gegeben hat, führen Sie bitte ein Update<br>durch, falls Sie nicht die Option<br>"Automatisches Update durchführen"<br>aktiviert haben. Dies bedarf<br>Administratorrechten. Klicken Sie dafür<br>einfach unten auf "Öffnen".</div>
<div class="a b" style="left:177px;top:507.500px">Öffnen</div>
<div class="a b" style="left:240px;top:507.500px">Ausblenden</div>
<div class="a b" style="left:38px;top:532.500px">24.05.2022</div>
<div class="a b" style="left:177px;top:551.500px">Handlungsbedarf: Checken Sie Ihre</div>
<div class="a" style="left:452px;top:354px;width:6px;height:99px;background:#c9c9c9"></div>
<svg style="left:450px;top:343px" width="9" height="6" viewBox="0 0 9 6"><path d="M0 5.500h9l-4.500-5.500z" fill="#555"/></svg>
<svg style="left:450px;top:551px" width="9" height="6" viewBox="0 0 9 6"><path d="M0 .5h9l-4.500 5.500z" fill="#555"/></svg>
<div class="a ttl" style="left:509px;top:336.500px;line-height:19px;letter-spacing:.1px">Neuigkeiten</div>
<div class="a b" style="left:512px;top:366.500px">24.05.2022</div>
<div class="a b" style="left:671px;top:391.500px;white-space:normal;width:260px">Releasenotes zum Mai-Release vom<br>23.05.2022</div>
<div class="a" style="left:671px;top:436.500px;white-space:normal;width:270px">Das Highlight des Mai-Releases 2022: die<br>neue Startseite!</div>
<div class="a b" style="left:671px;top:494.500px">Weiterlesen</div>
<svg style="left:511px;top:385px" width="143" height="125" viewBox="511 385 143 125">
<defs><linearGradient id="og" x1="0" y1="0" x2="1" y2="1"><stop offset="0" stop-color="#fbb52a"/><stop offset="1" stop-color="#f49b12"/></linearGradient>
<radialGradient id="pc" cx=".4" cy=".35" r=".8"><stop offset="0" stop-color="#fbe6c8"/><stop offset="1" stop-color="#f3cf9c"/></radialGradient></defs>
<rect x="511" y="385" width="143" height="125" fill="#f6f6f4"/>
<circle cx="591" cy="443" r="52.500" fill="url(#pc)"/>
<g fill="#f8ba22"><circle cx="543" cy="414.500" r="15"/><g stroke="#f8ba22" stroke-width="7" stroke-linecap="butt"><path d="M543 394.500v40M523 414.500h40M528.900 400.400l28.200 28.200M557.100 400.400l-28.200 28.200"/></g></g>
<circle cx="543" cy="414.500" r="10" fill="#f2f6f8" stroke="#2786b8" stroke-width="4"/>
<g fill="#f8ba22"><circle cx="640.500" cy="426.500" r="7.500"/><g stroke="#f8ba22" stroke-width="4"><path d="M640.500 416v21M630 426.500h21M633.100 419.100l14.800 14.800M647.900 419.100l-14.800 14.800"/></g></g>
<circle cx="640.500" cy="426.500" r="4.800" fill="#e8f3fa" stroke="#2a8cc0" stroke-width="1.800"/>
<rect x="541" y="412" width="79" height="57.500" rx="6" fill="#17566f"/>
<rect x="546.500" y="417.500" width="68" height="46" rx="1.500" fill="url(#og)"/>
<circle cx="579" cy="434" r="8" fill="none" stroke="#fdf3d8" stroke-width="1.600"/>
<path d="M554 449h24" stroke="#4d6b5c" stroke-width="1.600"/><path d="M578 449h27" stroke="#fde9b4" stroke-width="1.600"/>
<text x="563" y="458.500" font-family="Liberation Sans,sans-serif" font-size="6.500" fill="#fde28f" letter-spacing=".2">UPDATE...</text>
<rect x="573" y="469" width="15" height="9" fill="#21a6a0"/>
<path d="M560 482c2-4 8-5.500 20-5.500s18 1.500 20 5.500z" fill="#f7a61a"/>
<path d="M552 483h56l3 11.500h-63z" fill="#e9e9e9" stroke="#d8d8d8" stroke-width=".6"/>
<path d="M551 486.500h57M550 490h59" stroke="#fafafa" stroke-width="1.200" stroke-dasharray="3 1"/>
<path d="M545 496.500h72" stroke="#f7c88f" stroke-width="1.200"/>
<rect x="604.500" y="425.500" width="33" height="66" rx="4" fill="#17566f"/>
<rect x="607.500" y="430" width="27" height="53.500" fill="url(#og)"/>
<rect x="617" y="486" width="8" height="2.200" rx="1" fill="#21a6a0"/>
<path d="M614 448.500a4 4 0 0 1 2.500-7 5.500 5.500 0 0 1 10 1 3.300 3.300 0 0 1 .5 6z" fill="#fdf6ea"/>
<path d="M621 439.500l4 4.500h-2.300v4.500h-3.400v-4.500h-2.300z" fill="#2a8cc0"/>
<circle cx="621" cy="462" r="8" fill="none" stroke="#fdf3d8" stroke-width="1.600"/>
</svg>

<svg style="left:1082px;top:353px" width="231" height="153" viewBox="0 0 231 153">
<defs>
<linearGradient id="wall" x1="0" y1="0" x2="1" y2="0"><stop offset="0" stop-color="#7f97a0"/><stop offset=".35" stop-color="#93abb4"/><stop offset=".7" stop-color="#8ea6af"/><stop offset="1" stop-color="#7c96a0"/></linearGradient>
<linearGradient id="wallv" x1="0" y1="0" x2="0" y2="1"><stop offset="0" stop-color="#5f7a86" stop-opacity=".35"/><stop offset=".5" stop-color="#9fb6be" stop-opacity="0"/><stop offset="1" stop-color="#b8c6c8" stop-opacity=".35"/></linearGradient>
<filter id="bl" x="-5%" y="-5%" width="110%" height="110%"><feGaussianBlur stdDeviation=".9"/></filter>
<filter id="bl2" x="-10%" y="-10%" width="120%" height="120%"><feGaussianBlur stdDeviation="2"/></filter>
<clipPath id="pcl"><rect x="0" y="0" width="231" height="153"/></clipPath>
</defs>
<g clip-path="url(#pcl)">
<rect width="231" height="153" fill="url(#wall)"/><rect width="231" height="153" fill="url(#wallv)"/>
<!-- floor -->
<path d="M60 140h171v13h-171z" fill="#c4c9c8" filter="url(#bl)"/>
<g filter="url(#bl)">
<!-- window -->
<rect x="0" y="0" width="72" height="153" fill="#c6cac9"/>
<rect x="0" y="0" width="9" height="153" fill="#bfc4c3"/>
<rect x="22" y="0" width="20" height="153" fill="#e6e2d8"/>
<g fill="#8a867e"><rect x="30" y="3" width="8" height="5"/><rect x="30" y="13" width="8" height="5"/><rect x="30" y="23" width="8" height="5"/><rect x="30" y="33" width="8" height="5"/></g>
<g fill="#aaa69c"><rect x="28" y="66" width="9" height="5"/><rect x="28" y="78" width="9" height="5"/><rect x="28" y="90" width="9" height="5"/><rect x="28" y="102" width="9" height="5"/><rect x="28" y="114" width="9" height="5"/><rect x="28" y="126" width="9" height="5"/><rect x="28" y="138" width="9" height="5"/></g>
<rect x="24" y="60" width="3" height="93" fill="#f4f1ea"/>
<rect x="9" y="0" width="5" height="153" fill="#5b6e73"/><rect x="14" y="0" width="7" height="153" fill="#8fa1a4"/><rect x="20" y="0" width="3" height="153" fill="#5f7277"/>
<rect x="41" y="0" width="11" height="153" fill="#9eaaad"/><rect x="44" y="0" width="3" height="153" fill="#e3e6e6"/>
<path d="M0 30L52 43V60L0 40z" fill="#4a5c61"/><path d="M0 40L52 60v3L0 43z" fill="#72858a"/>
<!-- curtains -->
<rect x="52" y="0" width="19" height="132" fill="#cbc9d2"/><rect x="55" y="0" width="2.500" height="132" fill="#b3b1bd"/><rect x="60" y="0" width="2" height="132" fill="#dddbe2"/><rect x="65" y="0" width="3" height="132" fill="#b6b4c0"/>
<rect x="70" y="0" width="12" height="82" fill="#566a7a"/><rect x="70" y="82" width="10" height="50" fill="#7d8e99"/>
<path d="M40 118l34 12v23h-34z" fill="#cfd2d1"/>
<!-- tv + cabinet -->
<rect x="195" y="66" width="36" height="38" fill="#1e2a31"/><rect x="206" y="104" width="16" height="2.500" fill="#1b252b"/>
<rect x="168" y="107" width="63" height="5" fill="#c9ccc8"/><rect x="171" y="112" width="60" height="25" fill="#2c3942"/><rect x="171" y="137" width="60" height="3.500" fill="#bfc1bb"/>
<path d="M173 140.500h4l-1 8h-2z" fill="#cfcfc8"/>
<!-- lamp -->
<path d="M157 28h12l8 26h-27z" fill="#f5f5f7"/><rect x="163.300" y="54" width="1.600" height="92" fill="#dfe3e4"/><ellipse cx="164" cy="147" rx="6" ry="2.500" fill="#c9cdce"/>
<!-- chair -->
<path d="M148 92c8-4 14-2 16 4l-2 32c-6 6-16 8-26 6z" fill="#eceef0"/>
<path d="M138 134l-4 19M158 132l6 21" stroke="#e3e5e6" stroke-width="2.500"/>
<!-- woman -->
<path d="M117 44c0-10 6-16 14-15.500s13 7 12.500 17c-.5 9 2 20-2 30l-9-3-9 4c-4-2-7-8-6-16z" fill="#6f4e38"/>
<path d="M122 45c1-6 5-9 10-8s7 6 6 12-5 11-9 11-8-8-7-15z" fill="#dcae90"/><path d="M125 52c2 2 5 2 7 0" stroke="#fff" stroke-width="1.200" fill="none"/>
<path d="M114 70c4-6 10-8 16-8l12 2c6 1 9 5 9 12l-2 30h-34z" fill="#e7a93c"/>
<path d="M137 52c2-3 5-2 5 1l4 18c1 10 2 20-2 30l-7 4c-3-1-3-4-1-6l3-20z" fill="#dcae90"/>
<path d="M114 72c-4 10-10 22-18 30l4 5c10-5 18-14 22-24z" fill="#dcae90"/>
<rect x="133.500" y="48" width="3.500" height="9" rx="1.500" fill="#2a2a2e" transform="rotate(12 135 52)"/>
<path d="M96 128h56c2 8 0 18-2 25h-56c-2-8-1-18 2-25z" fill="#3b4b5a"/>
<!-- table -->
<ellipse cx="106" cy="117.500" rx="66" ry="12" fill="#f3f3f5"/><path d="M40 118c6 10 30 14 66 14s60-4 66-14c-2 12-30 17-66 17s-64-5-66-17z" fill="#d9dadd"/>
<path d="M84 131l-7 22h5l8-22zM96 132l-3 21h5l3-21zM120 132l6 21h6l-6-22zM130 131l5 22h4l-4-22z" fill="#d9a76a"/>
<!-- laptop -->
<path d="M56 81c0-1.500 1-2 2-2h35c1.500 0 2 .5 2 2l1.500 31h-38z" fill="#e9e9ec"/><path d="M58.500 112h38l12 2-2 1.500h-36z" fill="#5d5f66"/>
<path d="M112 112l22 1 12 3-30 1z" fill="#fafafa"/>
</g></g>
</svg>

<div class="a" style="left:1081px;top:514.500px;font-family:'DejaVu Sans Light','DejaVu Sans','Liberation Sans',sans-serif;font-weight:200;font-size:12.250px;letter-spacing:0;word-spacing:0;color:#4a4a4a;line-height:18px">Für komplexe Eingangsrechnungen</div>
<div class="a" style="left:1081px;top:531.500px;font-family:'DejaVu Sans','Liberation Sans',sans-serif;font-weight:bold;font-size:13.500px;letter-spacing:0;word-spacing:0;color:#1a1a1a;line-height:19px">Der neue Service Rebu+</div>
<div class="a ttl" style="left:1457px;top:336.500px;line-height:19px">Offene Kundenrechnungen 2022</div>
<div class="dd" style="left:1735px;top:361px;width:96px"></div><div class="dd" style="left:1832px;top:361px;width:56px"></div>
<div class="a" style="left:1737px;top:366px">Gesamt</div><div class="tri" style="left:1815px;top:370px;border-top-color:#111"></div>
<div class="a" style="left:1834px;top:366px;letter-spacing:0">2022</div><div class="tri" style="left:1873px;top:370px;border-top-color:#111"></div>
<div class="a" style="left:1457px;top:386.5px">Fällig</div>
<div class="a r n" style="left:1488px;width:100px;top:386.5px">1.213,80</div>
<div class="a" style="left:1457px;top:402.5px">Überfällig</div>
<div class="a r n" style="left:1488px;width:100px;top:402.5px">143.073,63</div>
<div class="a" style="left:1457px;top:418.5px">Gesamt</div>
<div class="a r n u" style="left:1488px;width:100px;top:418.5px">144.287,43</div>
<svg style="left:1655px;top:390px" width="210" height="165" viewBox="1655 390 210 165"><defs><filter id="ts" x="-20%" y="-30%" width="150%" height="180%"><feDropShadow dx="2" dy="3" stdDeviation="2.500" flood-opacity=".4"/></filter></defs>
<path d="M1739.500 397.500a74.500 74.500 0 1 0 .01 0z M1739.800 440a32 32 0 1 1-.01 0z" fill="#073a6e" fill-rule="evenodd"/>
<path d="M1721.800 483L1663.500 509L1669.600 519.200L1722.800 484.600z" fill="#fff"/><path d="M1720.300 481.300L1664 508.300L1668.700 517.200L1721.300 483.100z" fill="#1787e8"/>
<rect x="1776" y="457.500" width="77" height="30" rx="4.500" fill="#0a3b70" stroke="#d5e6f7" stroke-width="1.500" filter="url(#ts)"/>
</svg>
<div class="a b" style="left:1784px;top:465.500px;color:#fff;font-size:12.300px">Überfällig</div>
<div class="a ttl" style="left:35px;top:606.500px;line-height:19px;letter-spacing:.57px">Top Kunden</div>
<div class="a u" style="left:34px;top:640px">Weitere anzeigen</div>
<div class="a u" style="left:34px;top:656px"><span style="letter-spacing:.3px">10000</span> Kunden A–Z</div>
<div class="a r n" style="left:324px;width:90px;top:656px">84.590,61</div>
<div class="a" style="left:423px;top:657.5px;width:40px;height:11px;background:#fdd083"></div>
<div class="a u" style="left:34px;top:672px"><span style="letter-spacing:.3px">10018</span> Thomas Knauf Design</div>
<div class="a r n" style="left:324px;width:90px;top:672px">33.699,35</div>
<div class="a" style="left:423px;top:673.5px;width:16px;height:11px;background:#fdd083"></div>
<div class="a u" style="left:34px;top:688px"><span style="letter-spacing:.3px">10012</span> Billmanns Technik</div>
<div class="a r n" style="left:324px;width:90px;top:688px">6.000,00</div>
<div class="a" style="left:423px;top:689.5px;width:3px;height:11px;background:#fdd083"></div>
<div class="a u" style="left:34px;top:704px"><span style="letter-spacing:.3px">10022</span> Perdita Tannenhof</div>
<div class="a r n" style="left:324px;width:90px;top:704px">4.860,00</div>
<div class="a" style="left:423px;top:705.5px;width:2.5px;height:11px;background:#fdd083"></div>
<div class="a u" style="left:34px;top:720px"><span style="letter-spacing:.3px">10039</span> Waltraut Billmanns</div>
<div class="a r n" style="left:324px;width:90px;top:720px">3.750,00</div>
<div class="a" style="left:423px;top:721.5px;width:2px;height:11px;background:#fdd083"></div>
<div class="a u" style="left:34px;top:736px"><span style="letter-spacing:.3px">12600</span> Eyeo GmbH</div>
<div class="a r n" style="left:324px;width:90px;top:736px">2.077,50</div>
<div class="a" style="left:423px;top:737.5px;width:1px;height:11px;background:#fdd083"></div>
<div class="a u" style="left:34px;top:752px"><span style="letter-spacing:.3px">10137</span> ABC Software Leasing GmbH</div>
<div class="a r n" style="left:324px;width:90px;top:752px">2.020,00</div>
<div class="a" style="left:423px;top:753.5px;width:1px;height:11px;background:#fdd083"></div>
<div class="a u" style="left:34px;top:768px"><span style="letter-spacing:.3px">10111</span> Edufirm – Bildungsconsulting</div>
<div class="a r n" style="left:324px;width:90px;top:768px">608,40</div>
<div class="a" style="left:423px;top:769.5px;width:0.5px;height:11px;background:#fdd083"></div>
<div class="a u" style="left:34px;top:784px"><span style="letter-spacing:.3px">10132</span> Fieler Textagentur GmbH</div>
<div class="a r n" style="left:324px;width:90px;top:784px">225,00</div>
<div class="a u" style="left:34px;top:800px"><span style="letter-spacing:.3px">10037</span> BCME</div>
<div class="a r n" style="left:324px;width:90px;top:800px">94,13</div>
<div class="a u" style="left:34px;top:816px"><span style="letter-spacing:.3px">10033</span> Infill – Agentur für Interaktive Kommunikatio...</div>
<div class="a r n" style="left:324px;width:90px;top:816px">49,00</div>
<div class="a" style="left:422.5px;top:688px;width:1.500px;height:142px;background:linear-gradient(#6a5a3a,#7a7a7a 60%,rgba(200,200,200,.05))"></div>
<div class="a" style="left:465px;top:634px;width:1px;height:22px;background:#d0d0d0"></div>
<div class="a ttl" style="left:509px;top:606.500px;line-height:19px">Aufträge 2022</div>
<div class="dd" style="left:717px;top:631px;width:166px"></div><div class="dd" style="left:884px;top:631px;width:56px"></div>
<div class="a" style="left:719px;top:636px">Bestand (Verlauf)</div><div class="tri" style="left:867px;top:641px;border-top-color:#111"></div>
<div class="a" style="left:886px;top:636px;letter-spacing:0">2022</div><div class="tri" style="left:925px;top:641px;border-top-color:#111"></div>
<div class="a" style="left:571px;top:664.3px;width:368px;height:1.400px;background:repeating-linear-gradient(90deg,#b0b0b0 0,#b0b0b0 1px,transparent 1px,transparent 3px)"></div>
<div class="a r" style="left:491px;width:71.500px;top:658.5px;font-size:10.600px;letter-spacing:0;line-height:13px">12.010,64</div>
<div class="a" style="left:571px;top:694.3px;width:368px;height:1.400px;background:repeating-linear-gradient(90deg,#b0b0b0 0,#b0b0b0 1px,transparent 1px,transparent 3px)"></div>
<div class="a r" style="left:491px;width:71.500px;top:688.5px;font-size:10.600px;letter-spacing:0;line-height:13px">9.608,51</div>
<div class="a" style="left:571px;top:724.8px;width:368px;height:1.400px;background:repeating-linear-gradient(90deg,#b0b0b0 0,#b0b0b0 1px,transparent 1px,transparent 3px)"></div>
<div class="a r" style="left:491px;width:71.500px;top:719.0px;font-size:10.600px;letter-spacing:0;line-height:13px">7.206,38</div>
<div class="a" style="left:571px;top:755.3px;width:368px;height:1.400px;background:repeating-linear-gradient(90deg,#b0b0b0 0,#b0b0b0 1px,transparent 1px,transparent 3px)"></div>
<div class="a r" style="left:491px;width:71.500px;top:749.5px;font-size:10.600px;letter-spacing:0;line-height:13px">4.804,26</div>
<div class="a" style="left:571px;top:785.8px;width:368px;height:1.400px;background:repeating-linear-gradient(90deg,#b0b0b0 0,#b0b0b0 1px,transparent 1px,transparent 3px)"></div>
<div class="a r" style="left:491px;width:71.500px;top:780.0px;font-size:10.600px;letter-spacing:0;line-height:13px">2.402,13</div>
<div class="a" style="left:571px;top:816.3px;width:368px;height:1.400px;background:repeating-linear-gradient(90deg,#b0b0b0 0,#b0b0b0 1px,transparent 1px,transparent 3px)"></div>
<div class="a r" style="left:491px;width:71.500px;top:810.5px;font-size:10.600px;letter-spacing:0;line-height:13px">0,00</div>
<div class="a" style="left:578px;top:816.2px;width:18px;height:1.5px;background:#fdb444"></div>
<div class="a" style="left:608.2px;top:754.3px;width:18px;height:63.40000000000009px;background:#fdb444"></div>
<div class="a" style="left:638.2px;top:665px;width:18px;height:152.70000000000005px;background:#fdb444"></div>
<div class="a" style="left:668.5px;top:801.5px;width:18px;height:16.200000000000045px;background:#fdb444"></div>
<div class="a" style="left:729px;top:743px;width:18px;height:74.70000000000005px;background:#fdb444"></div>
<div class="a" style="left:563.0px;width:50px;text-align:center;top:825px;font-size:10.500px;letter-spacing:0;word-spacing:0;line-height:13px">Jan...</div>
<div class="a" style="left:593.23px;width:50px;text-align:center;top:825px;font-size:10.500px;letter-spacing:0;word-spacing:0;line-height:13px">Fe...</div>
<div class="a" style="left:623.46px;width:50px;text-align:center;top:825px;font-size:10.500px;letter-spacing:0;word-spacing:0;line-height:13px">März</div>
<div class="a" style="left:653.69px;width:50px;text-align:center;top:825px;font-size:10.500px;letter-spacing:0;word-spacing:0;line-height:13px">April</div>
<div class="a" style="left:683.92px;width:50px;text-align:center;top:825px;font-size:10.500px;letter-spacing:0;word-spacing:0;line-height:13px">Mai</div>
<div class="a" style="left:714.15px;width:50px;text-align:center;top:825px;font-size:10.500px;letter-spacing:0;word-spacing:0;line-height:13px">Juni</div>
<div class="a" style="left:744.38px;width:50px;text-align:center;top:825px;font-size:10.500px;letter-spacing:0;word-spacing:0;line-height:13px">Juli</div>
<div class="a" style="left:774.61px;width:50px;text-align:center;top:825px;font-size:10.500px;letter-spacing:0;word-spacing:0;line-height:13px">Au...</div>
<div class="a" style="left:804.84px;width:50px;text-align:center;top:825px;font-size:10.500px;letter-spacing:0;word-spacing:0;line-height:13px">Se...</div>
<div class="a" style="left:835.0699999999999px;width:50px;text-align:center;top:825px;font-size:10.500px;letter-spacing:0;word-spacing:0;line-height:13px">Ok...</div>
<div class="a" style="left:865.3px;width:50px;text-align:center;top:825px;font-size:10.500px;letter-spacing:0;word-spacing:0;line-height:13px">No...</div>
<div class="a" style="left:895.53px;width:50px;text-align:center;top:825px;font-size:10.500px;letter-spacing:0;word-spacing:0;line-height:13px">De...</div>
<div class="a ttl" style="left:983px;top:606.500px;line-height:19px">Liquidität</div>
<div class="a u" style="left:1301px;top:632px">Liquiditätsübersicht</div>
<div class="a" style="left:994px;top:650px">Flüssige Mittel</div>
<div class="a r n" style="left:1172px;width:100px;top:650px">2.552.128,85</div>
<div class="a" style="left:983px;top:666px">+</div>
<div class="a" style="left:994px;top:666px">Offene Kundenrechnungen</div>
<div class="a r n" style="left:1172px;width:100px;top:666px">2.942.300,46</div>
<div class="a" style="left:983px;top:682px">–</div>
<div class="a" style="left:994px;top:682px">Offene Lieferantenrechnungen</div>
<div class="a r n" style="left:1172px;width:100px;top:682px">1.101.061,80</div>
<div class="a" style="left:994px;top:714px">Kurzfristige Liquidität</div>
<div class="a r u b" style="left:1172px;width:100px;top:714px;letter-spacing:.1px;font-size:12.200px">4.393.367,51</div>
<div class="a ttl" style="left:1457px;top:606.500px;line-height:19px;letter-spacing:.37px">Top Lieferanten</div>
<div class="a u" style="left:1456px;top:640px">Weitere anzeigen</div>
<div class="a u" style="left:1456px;top:656px"><span style="letter-spacing:.3px">70008</span> Billmanns Technik</div>
<div class="a r n" style="left:1749px;width:90px;top:656px">28.022,07</div>
<div class="a" style="left:1848px;top:657.5px;width:40px;height:11px;background:#fdd083"></div>
<div class="a u" style="left:1456px;top:672px"><span style="letter-spacing:.3px">70063</span> Esko-Graphics BV</div>
<div class="a r n" style="left:1749px;width:90px;top:672px">3.884,56</div>
<div class="a" style="left:1848px;top:673.5px;width:5.5px;height:11px;background:#fdd083"></div>
<div class="a u" style="left:1456px;top:688px"><span style="letter-spacing:.3px">70026</span> ABC Software Leasing GmbH</div>
<div class="a r n" style="left:1749px;width:90px;top:688px">2.521,01</div>
<div class="a" style="left:1848px;top:689.5px;width:3.5px;height:11px;background:#fdd083"></div>
<div class="a u" style="left:1456px;top:704px"><span style="letter-spacing:.3px">70000</span> Wohnbau GmbH</div>
<div class="a r n" style="left:1749px;width:90px;top:704px">1.687,39</div>
<div class="a" style="left:1848px;top:705.5px;width:2.5px;height:11px;background:#fdd083"></div>
<div class="a u" style="left:1456px;top:720px"><span style="letter-spacing:.3px">70114</span> Rainer Goebbels</div>
<div class="a r n" style="left:1749px;width:90px;top:720px">812,78</div>
<div class="a" style="left:1848px;top:721.5px;width:1px;height:11px;background:#fdd083"></div>
<div class="a u" style="left:1456px;top:736px"><span style="letter-spacing:.3px">70074</span> Henry Wilke</div>
<div class="a r n" style="left:1749px;width:90px;top:736px">696,15</div>
<div class="a" style="left:1848px;top:737.5px;width:1px;height:11px;background:#fdd083"></div>
<div class="a u" style="left:1456px;top:752px"><span style="letter-spacing:.3px">70043</span> Sonnenberg Verwaltungsgesellschaft mbH</div>
<div class="a r n" style="left:1749px;width:90px;top:752px">252,12</div>
<div class="a u" style="left:1456px;top:768px"><span style="letter-spacing:.3px">70001</span> Mayer GmbH</div>
<div class="a r n" style="left:1749px;width:90px;top:768px">200,00</div>
<div class="a u" style="left:1456px;top:784px"><span style="letter-spacing:.3px">70095</span> ABC Glas Vertriebs- + Beteiligungsgesellsch...</div>
<div class="a r n" style="left:1749px;width:90px;top:784px">196,15</div>
<div class="a u" style="left:1456px;top:800px"><span style="letter-spacing:.3px">70010</span> Textlupe Lektorat</div>
<div class="a r n" style="left:1749px;width:90px;top:800px">81,78</div>
<div class="a u" style="left:1456px;top:816px"><span style="letter-spacing:.3px">70024</span> Travel Hopper GmbH</div>
<div class="a r n" style="left:1749px;width:90px;top:816px">60,00</div>
<div class="a" style="left:1847.5px;top:688px;width:1.500px;height:142px;background:linear-gradient(#6a5a3a,#7a7a7a 60%,rgba(200,200,200,.05))"></div>
<svg style="left:227px;top:945px" width="44" height="44" viewBox="0 0 44 44"><path d="M22 1v42M1 22h42" stroke="#555" stroke-width="3.200"/></svg>
<div class="a" style="left:0;top:995px;width:1900px;height:57px;background:#fff"></div>
<svg style="left:26px;top:1015px" width="21" height="21" viewBox="0 0 21 21"><path d="M10.500 0v21M0 10.500h21" stroke="#f5c518" stroke-width="1.600"/></svg>
</body></html>
